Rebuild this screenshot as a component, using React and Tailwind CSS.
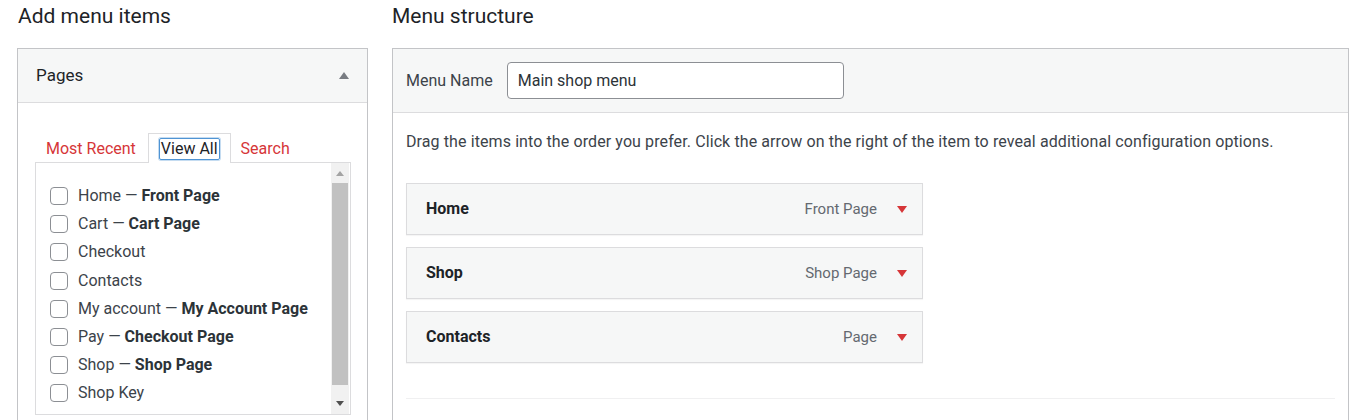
import React from 'react';

const pages = [
  { name: 'Home', extra: 'Front Page' },
  { name: 'Cart', extra: 'Cart Page' },
  { name: 'Checkout' },
  { name: 'Contacts' },
  { name: 'My account', extra: 'My Account Page' },
  { name: 'Pay', extra: 'Checkout Page' },
  { name: 'Shop', extra: 'Shop Page' },
  { name: 'Shop Key' },
];

const menuItems = [
  { title: 'Home', type: 'Front Page' },
  { title: 'Shop', type: 'Shop Page' },
  { title: 'Contacts', type: 'Page' },
];

const Triangle = ({ up, className }) => (
  <svg width="10" height="7" viewBox="0 0 10 7" className={className}>
    {up ? <path d="M0 7 L5 0 L10 7 Z" fill="currentColor" /> : <path d="M0 0 L10 0 L5 7 Z" fill="currentColor" />}
  </svg>
);

const App = () => {
  return (
    <div className="h-[420px] w-[1350px] overflow-hidden bg-white pl-[17px] pt-[2px] text-[#3c434a] flex gap-[24px]" style={{ fontFamily: 'Roboto, "Noto Sans", sans-serif' }}>
      {/* Left column */}
      <div className="w-[351px] shrink-0">
        <h2 className="text-[21px] leading-[28px] text-[#1d2327] pl-px">Add menu items</h2>
        <div className="mt-[18px] border border-[#c3c4c7] h-[400px]">
          <div className="h-[54px] bg-[#f6f7f7] border-b border-[#dcdcde] flex items-center justify-between pl-[18px] pr-[18px]">
            <span className="text-[17px] text-[#1d2327]">Pages</span>
            <Triangle up className="text-[#787c82]" />
          </div>
          <div className="pt-[31px] pl-[18px] pr-[16px]">
            {/* Tabs */}
            <div className="flex items-end h-[29px] text-[16px] relative z-10">
              <span className="px-[10px] pb-[2px] text-[#d63638]">Most Recent</span>
              <span className="ml-[2px] h-[30px] border border-b-0 border-[#dcdcde] bg-white px-[10px] pt-[3px]">
                <span className="inline-block border border-[#4f94d4] rounded-[2px] px-px leading-[20px] text-[#1d2327] shadow-[0_0_0_1px_#c5dcf1]">View All</span>
              </span>
              <span className="px-[10px] pb-[2px] text-[#d63638]">Search</span>
            </div>
            {/* List */}
            <div className="border border-[#dcdcde] h-[253px] flex -mt-px -ml-px">
              <div className="flex-1 pt-[19px] pl-[14px]">
                {pages.map((p) => (
                  <label key={p.name} className="flex items-center h-[28.2px] text-[16px]">
                    <span className="w-[18px] h-[18px] rounded-[4px] border border-[#8c8f94] bg-white shrink-0" />
                    <span className="ml-[10px] text-[#3c434a] whitespace-nowrap">
                      {p.name}
                      {p.extra && (
                        <>
                          {' — '}
                          <b className="font-bold text-[#2c3338]">{p.extra}</b>
                        </>
                      )}
                    </span>
                  </label>
                ))}
              </div>
              {/* scrollbar */}
              <div className="w-[18px] mr-px bg-[#f1f1f1] flex flex-col items-center">
                <div className="h-[20px] flex items-center justify-center">
                  <svg width="8" height="5" viewBox="0 0 8 5"><path d="M0 5 L4 0 L8 5 Z" fill="#a3a3a3" /></svg>
                </div>
                <div className="w-[16px] h-[202px] bg-[#c1c1c1]" />
                <div className="flex-1 flex items-end justify-center pb-[8px]">
                  <svg width="8" height="5" viewBox="0 0 8 5"><path d="M0 0 L8 0 L4 5 Z" fill="#505050" /></svg>
                </div>
              </div>
            </div>
          </div>
        </div>
      </div>

      {/* Right column */}
      <div className="flex-1 mr-px">
        <h2 className="text-[21px] leading-[28px] text-[#1d2327]">Menu structure</h2>
        <div className="mt-[18px] border border-[#c3c4c7] h-[400px]">
          <div className="h-[64px] bg-[#f6f7f7] border-b border-[#dcdcde] flex items-center pl-[13px]">
            <span className="text-[16px] text-[#3c434a]">Menu Name</span>
            <div className="ml-[14px] w-[337px] h-[37px] border border-[#8c8f94] rounded-[4px] bg-white flex items-center px-[10px] text-[16px] text-[#2c3338]">
              Main shop menu
            </div>
          </div>
          <div className="px-[13px]">
            <p className="mt-[19px] text-[16px] leading-[20px] tracking-[0.1px] text-[#3c434a]">
              Drag the items into the order you prefer. Click the arrow on the right of the item to reveal additional configuration options.
            </p>
            <div className="mt-[31px] flex flex-col gap-[12px]">
              {menuItems.map((m) => (
                <div key={m.title} className="w-[517px] h-[52px] bg-[#f6f7f7] border border-[#dcdcde] flex items-center pl-[19px] pr-[15px] shadow-[0_1px_1px_rgba(0,0,0,0.04)]">
                  <span className="text-[16px] font-bold text-[#1d2327]">{m.title}</span>
                  <span className="ml-auto text-[15px] text-[#646970]">{m.type}</span>
                  <Triangle className="ml-[20px] text-[#d63638]" />
                </div>
              ))}
            </div>
            <div className="mt-[35px] border-t border-[#f0f0f1]" />
          </div>
        </div>
      </div>
    </div>
  );
};

export default App;
